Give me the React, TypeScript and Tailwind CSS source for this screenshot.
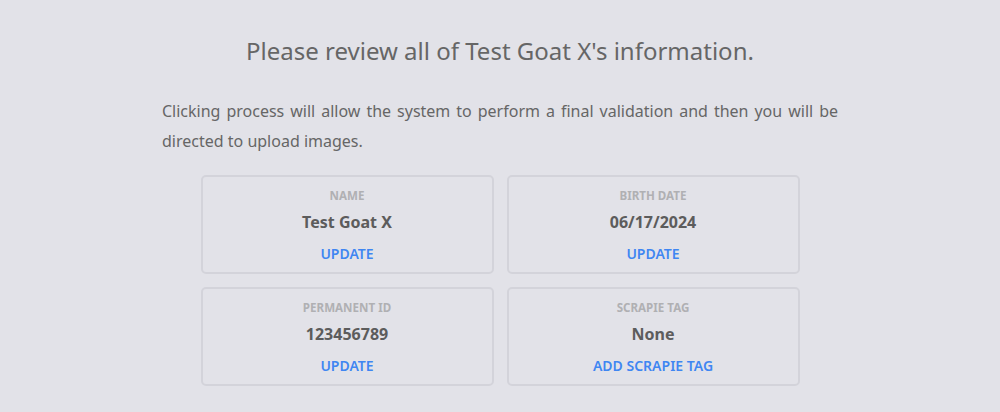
import React from "react";

const cards = [
  { label: "NAME", value: "Test Goat X", action: "UPDATE" },
  { label: "BIRTH DATE", value: "06/17/2024", action: "UPDATE" },
  { label: "PERMANENT ID", value: "123456789", action: "UPDATE" },
  { label: "SCRAPIE TAG", value: "None", action: "ADD SCRAPIE TAG" },
];

export default function App() {
  return (
    <div
      className="w-[1000px] h-[412px] bg-[#e2e2e8] overflow-hidden"
      style={{ fontFamily: '"Noto Sans", "Open Sans", sans-serif' }}
    >
      <div className="w-[676px] mx-auto pt-[34px]">
        <h1 className="text-center text-[24px] leading-[34px] text-[#666666] font-normal">
          Please review all of Test Goat X's information.
        </h1>
        <p className="mt-[28px] text-[16px] leading-[30px] text-[#666666] text-justify">
          Clicking process will allow the system to perform a final validation and then you will be directed to upload images.
        </p>
        <div className="mt-[19px] mx-auto w-[599px] grid grid-cols-2 gap-x-[13px] gap-y-[13px]">
          {cards.map((c) => (
            <div
              key={c.label}
              className="h-[99px] border-2 border-[#d3d3da] rounded-[5px] flex flex-col items-center pt-[11px]"
            >
              <div className="text-[11.6px] leading-[16px] font-bold text-[#b0b0b3]">
                {c.label}
              </div>
              <div className="mt-[7px] text-[16px] leading-[22px] font-bold text-[#5c5c5c]">
                {c.value}
              </div>
              <div className="mt-[11px] text-[14px] leading-[20px] font-semibold text-[#3f86f2] cursor-pointer">
                {c.action}
              </div>
            </div>
          ))}
        </div>
      </div>
    </div>
  );
}
